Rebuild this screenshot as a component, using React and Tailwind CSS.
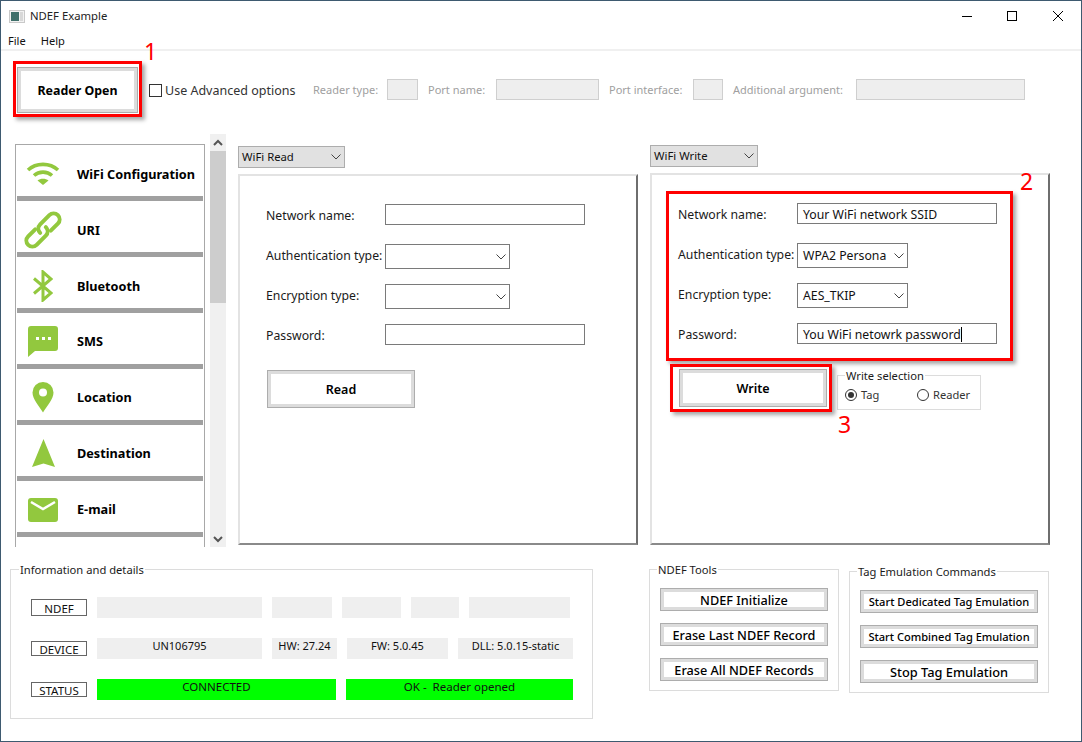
import React from "react";

const Chev = ({ className = "" }) => (
  <svg width="10" height="6" viewBox="0 0 10 6" className={className}>
    <path d="M0.5 0.5 L5 5 L9.5 0.5" fill="none" stroke="#444" strokeWidth="1" />
  </svg>
);

const G = "#92c83e";

const Wifi = () => (
  <svg width="34" height="24" viewBox="0 0 34 24">
    <path d="M2 8 C10 0.5 24 0.5 32 8" fill="none" stroke={G} strokeWidth="3.6" />
    <path d="M8 13.5 C13 9 21 9 26 13.5" fill="none" stroke={G} strokeWidth="3.6" />
    <path d="M17 23 L11.5 18.5 C14.5 16 19.5 16 22.5 18.5 Z" fill={G} />
  </svg>
);
const LinkIcon = () => (
  <svg width="38" height="38" viewBox="0 0 38 38">
    <g transform="rotate(-45 19 19)" fill="none" stroke={G} strokeWidth="4" strokeLinecap="round">
      <path d="M14 13 H4 A6 6 0 0 0 4 25 H17 A6 6 0 0 0 23 19" />
      <path d="M24 25 H34 A6 6 0 0 0 34 13 H21 A6 6 0 0 0 15 19" />
    </g>
  </svg>
);
const Bt = () => (
  <svg width="20" height="32" viewBox="0 0 20 32">
    <path d="M1 8.5 L18 23 L10 30 L10 2 L18 9 L1 23.5" fill="none" stroke={G} strokeWidth="3" />
  </svg>
);
const Sms = () => (
  <svg width="30" height="31" viewBox="0 0 30 31">
    <path d="M3 0 H27 A3 3 0 0 1 30 3 V22 A3 3 0 0 1 27 25 H7 L0 31 V3 A3 3 0 0 1 3 0 Z" fill={G} />
    <rect x="8" y="11" width="3" height="3" fill="#fff" />
    <rect x="14" y="11" width="3" height="3" fill="#fff" />
    <rect x="20" y="11" width="3" height="3" fill="#fff" />
  </svg>
);
const Pin = () => (
  <svg width="22" height="31" viewBox="0 0 22 31">
    <path d="M11 30.5 C7 24 0.5 17 0.5 10.5 A10.5 10.5 0 0 1 21.5 10.5 C21.5 17 15 24 11 30.5 Z" fill={G} />
    <circle cx="11" cy="10.5" r="4" fill="#fff" />
  </svg>
);
const Dest = () => (
  <svg width="23" height="29" viewBox="0 0 23 29">
    <path d="M11.5 0 L23 28 L11.5 24.5 L0 28 Z" fill={G} />
  </svg>
);
const Mail = () => (
  <svg width="30" height="24" viewBox="0 0 30 24">
    <rect width="30" height="24" rx="3" fill={G} />
    <path d="M3 4 L15 11 L27 4" fill="none" stroke="#fff" strokeWidth="2.6" />
  </svg>
);

const items = [
  ["WiFi Configuration", Wifi, "mt-[2px]"],
  ["URI", LinkIcon, "mt-[2px]"],
  ["Bluetooth", Bt, "mt-[2px]"],
  ["SMS", Sms, "mt-0"],
  ["Location", Pin, "mt-0"],
  ["Destination", Dest, "mt-0"],
  ["E-mail", Mail, "mt-0"],
];

const Btn = ({ className = "", children }) => (
  <div className={`flex items-center justify-center bg-white border border-[#adadad] shadow-[inset_0_0_0_3px_#dcdcdc] text-black pt-[2px] ${className}`}>
    {children}
  </div>
);

const Combo = ({ label, w }) => (
  <div className={`flex items-center justify-between h-[22px] bg-[#e1e1e1] border border-[#adadad] pl-[3px] pr-[3px] text-[11.3px] text-[#111] ${w}`}>
    <span>{label}</span>
    <Chev />
  </div>
);

const Row = ({ label, className = "", labelClass = "", children }) => (
  <div className={`flex items-center ${className}`}>
    <div className={`w-[119px] text-[12.25px] leading-[16px] text-[#1a1a1a] whitespace-nowrap ${labelClass}`}>{label}</div>
    {children}
  </div>
);

const Input = ({ value, caret }) => (
  <div className="flex items-center w-[200px] h-[21px] border border-[#7a7a7a] bg-white pl-[5px] pt-px text-[12.25px] leading-[15px] text-[#111]">
    {value}
    {caret && <span className="w-px h-[15px] bg-black" />}
  </div>
);

const Select = ({ value, w }) => (
  <div className={`flex items-center justify-between h-[25px] border border-[#7a7a7a] bg-white pl-[5px] pr-[3px] pt-px text-[12.25px] text-[#111] ${w}`}>
    <span>{value}</span>
    <Chev />
  </div>
);

const Form = ({ values, caret }) => (
  <div className="flex flex-col pt-[28px]">
    <Row label="Network name:" labelClass="pt-[2px]"><Input value={values[0]} /></Row>
    <Row label="Authentication type:" labelClass="pb-[2px]" className="mt-[19px]"><Select value={values[1]} w={values[4]} /></Row>
    <Row label="Encryption type:" labelClass="pb-[2px]" className="mt-[15px]"><Select value={values[2]} w={values[4]} /></Row>
    <Row label="Password:" labelClass="pt-[2px]" className="mt-[15px]"><Input value={values[3]} caret={caret} /></Row>
  </div>
);

const Panel = ({ h, children }) => (
  <div className={`relative w-[400px] mt-[6px] pl-[26px] bg-white border-2 border-t-[#e3e3e3] border-l-[#e3e3e3] border-r-[#6e6e6e] border-b-[#8a8a8a] ${h}`}>
    {children}
  </div>
);

const Group = ({ title, className = "", legend = "left-[7px]", children }) => (
  <div className={`relative border border-[#dcdcdc] ${className}`}>
    <span className={`absolute -top-[8px] ${legend} bg-white px-px text-[11.2px] leading-[16px] text-[#1a1a1a] whitespace-nowrap`}>{title}</span>
    {children}
  </div>
);

const Red = ({ className = "" }) => (
  <div className={`absolute border-[3px] border-[#f00] shadow-[3px_3px_4px_rgba(0,0,0,0.35)] pointer-events-none ${className}`} />
);

const Num = ({ n, className = "" }) => (
  <span className={`absolute text-[23px] leading-[26px] text-[#f00] ${className}`}>{n}</span>
);

const Disabled = ({ label, w, lw }) => (
  <>
    <span className={`text-[11px] text-[#a0a0a0] whitespace-nowrap shrink-0 ${lw}`}>{label}</span>
    <div className={`h-[21px] mb-px ml-[9px] mr-[10px] bg-[#eeeeee] border border-[#cfcfcf] shrink-0 ${w}`} />
  </>
);

const Tag = ({ t, className = "" }) => (
  <div className={`flex items-center justify-center w-[56px] border border-[#666] pt-[2px] leading-none text-[11.5px] text-[#111] ${className}`}>{t}</div>
);
const Field = ({ t = "", w, green }) => (
  <div className={`h-[21px] text-center leading-[15px] text-[#111] whitespace-pre ${green ? "bg-[#00ff00] text-[11.5px]" : "bg-[#efefef] text-[11px]"} ${w}`}>{t}</div>
);

export default function App() {
  return (
    <div className="relative w-[1082px] h-[742px] overflow-hidden bg-white border border-[#3e5a70] flex flex-col font-['Noto_Sans','Open_Sans',sans-serif]">
      {/* Title */}
      <div className="flex items-center h-[30px] relative shrink-0">
        <svg width="16" height="13" viewBox="0 0 16 13" className="ml-[8px]">
          <rect width="16" height="13" fill="#c9c9c9" />
          <rect x="1" y="1" width="14" height="11" fill="#f2f2f2" />
          <rect x="2" y="2" width="8" height="9" fill="#3f6f6a" />
          <rect x="11" y="2" width="3" height="9" fill="#d8d8d8" />
        </svg>
        <span className="ml-[5px] text-[11.3px] text-[#222]">NDEF Example</span>
        <div className="ml-auto flex items-center">
          <svg width="12" height="12" viewBox="0 0 12 12" className="mr-[33px]"><path d="M1 6.5H11" stroke="#000" /></svg>
          <svg width="12" height="12" viewBox="0 0 12 12" className="mr-[34px]"><rect x="1.5" y="1.5" width="9" height="9" fill="none" stroke="#000" /></svg>
          <svg width="12" height="12" viewBox="0 0 12 12" className="mr-[17px]"><path d="M1 1L11 11M11 1L1 11" stroke="#000" /></svg>
        </div>
      </div>
      {/* Menu */}
      <div className="flex items-center h-[18px] shrink-0 pl-[7px] pt-[2px] gap-[15px] text-[11.1px] text-[#111]">
        <span>File</span>
        <span>Help</span>
      </div>
      <div className="h-[2px] shrink-0 bg-[#f0f0f0]" />

      {/* Toolbar */}
      <div className="flex items-center h-[46px] mt-[16px] shrink-0 pl-[16px]">
        <Btn className="w-[121px] h-[46px] text-[12.4px] font-bold shrink-0">Reader Open</Btn>
        <div className="ml-[11px] w-[13px] h-[13px] border border-[#333] bg-white shrink-0" />
        <span className="ml-[3px] pt-[2px] w-[148px] text-[12.5px] text-[#333] whitespace-nowrap">Use Advanced options</span>
        <Disabled label="Reader type:" lw="w-[65px]" w="w-[31px]" />
        <Disabled label="Port name:" lw="w-[59px]" w="w-[103px]" />
        <Disabled label="Port interface:" lw="w-[75px]" w="w-[30px]" />
        <Disabled label="Additional argument:" lw="w-[114px]" w="w-[169px]" />
      </div>

      {/* Main */}
      <div className="flex h-[413px] mt-[21px] shrink-0 pl-[14px]">
        <div className="mt-[10px] w-[190px] h-[403px] overflow-hidden border-x border-t border-[#a8a8a8] px-px flex flex-col shrink-0">
          {items.map(([t, I, m]) => (
            <div key={t} className="shrink-0 flex flex-col">
              <div className="flex items-center h-[51px] pt-[6px]">
                <div className="w-[52px] flex justify-center"><I /></div>
                <span className={`ml-[8px] text-[12.7px] font-bold text-black whitespace-nowrap ${m}`}>{t}</span>
              </div>
              <div className="h-[5px] bg-[#a0a0a0]" />
            </div>
          ))}
        </div>
        <div className="ml-[5px] w-[16px] flex flex-col items-center bg-[#f0f0f0] shrink-0">
          <div className="h-[17px] flex items-center justify-center">
            <svg width="10" height="7" viewBox="0 0 10 7"><path d="M1 6 L5 2 L9 6" fill="none" stroke="#555" strokeWidth="2" /></svg>
          </div>
          <div className="w-full h-[152px] bg-[#cdcdcd]" />
          <div className="mt-auto h-[16px] flex items-center justify-center">
            <svg width="10" height="7" viewBox="0 0 10 7"><path d="M1 1 L5 5 L9 1" fill="none" stroke="#555" strokeWidth="2" /></svg>
          </div>
        </div>

        {/* Read column */}
        <div className="ml-[12px] pt-[12px] w-[400px] shrink-0">
          <Combo label="WiFi Read" w="w-[107px]" />
          <Panel h="h-[371px]">
            <Form values={["", "", "", "", "w-[125px]"]} />
            <Btn className="ml-px mt-[25px] w-[148px] h-[38px] text-[12.5px] font-semibold">Read</Btn>
          </Panel>
        </div>

        {/* Write column */}
        <div className="ml-[12px] pt-[11px] w-[400px] shrink-0">
          <Combo label="WiFi Write" w="w-[108px]" />
          <Panel h="h-[372px]">
            <Form caret values={["Your WiFi network SSID", "WPA2 Persona", "AES_TKIP", "You WiFi netowrk password", "w-[111px]"]} />
            <div className="flex items-start mt-[25px]">
              <Btn className="ml-px w-[148px] h-[38px] text-[12.5px] font-semibold">Write</Btn>
              <Group title="Write selection" className="ml-[10px] mt-[6px] w-[144px] h-[35px] flex items-center pl-[7px] pt-[5px]">
                <span className="w-[12px] h-[12px] rounded-full border border-[#333] flex items-center justify-center shrink-0">
                  <span className="w-[6px] h-[6px] rounded-full bg-[#333]" />
                </span>
                <span className="ml-[4px] w-[56px] text-[11.1px] text-[#333]">Tag</span>
                <span className="w-[12px] h-[12px] rounded-full border border-[#333] shrink-0" />
                <span className="ml-[4px] text-[11.1px] text-[#333]">Reader</span>
              </Group>
            </div>
          </Panel>
        </div>
      </div>

      {/* Bottom */}
      <div className="flex items-start mt-[22px] pl-[9px]">
        <Group title="Information and details" legend="left-[8px]" className="w-[583px] h-[150px] pt-[27px] pl-[20px] shrink-0">
          <div className="flex items-center h-[21px]">
            <Tag t="NDEF" className="h-[17px]" />
            <div className="ml-[10px] flex gap-[10px]">
              <Field w="w-[165px]" /><Field w="w-[60px]" /><Field w="w-[59px]" /><Field w="w-[48px]" /><Field w="w-[101px]" />
            </div>
          </div>
          <div className="flex items-center h-[21px] mt-[20px]">
            <Tag t="DEVICE" className="h-[15px]" />
            <div className="ml-[10px] flex gap-[10px]">
              <Field w="w-[165px]" t="UN106795" /><Field w="w-[65px]" t="HW: 27.24" /><Field w="w-[101px]" t="FW: 5.0.45" /><Field w="w-[115px]" t="DLL: 5.0.15-static" />
            </div>
          </div>
          <div className="flex items-center h-[21px] mt-[20px]">
            <Tag t="STATUS" className="h-[15px]" />
            <div className="ml-[10px] flex gap-[10px]">
              <Field green w="w-[239px]" t="CONNECTED" /><Field green w="w-[227px]" t="OK -  Reader opened" />
            </div>
          </div>
        </Group>

        <Group title="NDEF Tools" className="ml-[56px] w-[190px] h-[122px] pt-[18px] pl-[10px] flex flex-col gap-[12px] shrink-0">
          <Btn className="w-[168px] h-[23px] text-[12.7px] font-medium">NDEF Initialize</Btn>
          <Btn className="w-[168px] h-[23px] text-[12.7px] font-medium">Erase Last NDEF Record</Btn>
          <Btn className="w-[168px] h-[23px] text-[12.7px] font-medium">Erase All NDEF Records</Btn>
        </Group>

        <Group title="Tag Emulation Commands" className="ml-[10px] mt-[2px] w-[200px] h-[122px] pt-[18px] pl-[10px] flex flex-col gap-[12px] shrink-0">
          <Btn className="w-[178px] h-[23px] text-[11.1px] font-medium">Start Dedicated Tag Emulation</Btn>
          <Btn className="w-[178px] h-[23px] text-[11.1px] font-medium">Start Combined Tag Emulation</Btn>
          <Btn className="w-[178px] h-[23px] text-[12.8px] font-medium">Stop Tag Emulation</Btn>
        </Group>
      </div>

      {/* Annotations */}
      <Red className="left-[12px] top-[60px] w-[129px] h-[56px]" />
      <Red className="left-[665px] top-[190px] w-[347px] h-[170px]" />
      <Red className="left-[669px] top-[363px] w-[162px] h-[48px]" />
      <Num n="1" className="left-[143px] top-[37px]" />
      <Num n="2" className="left-[1019px] top-[167px]" />
      <Num n="3" className="left-[837px] top-[410px]" />
    </div>
  );
}
